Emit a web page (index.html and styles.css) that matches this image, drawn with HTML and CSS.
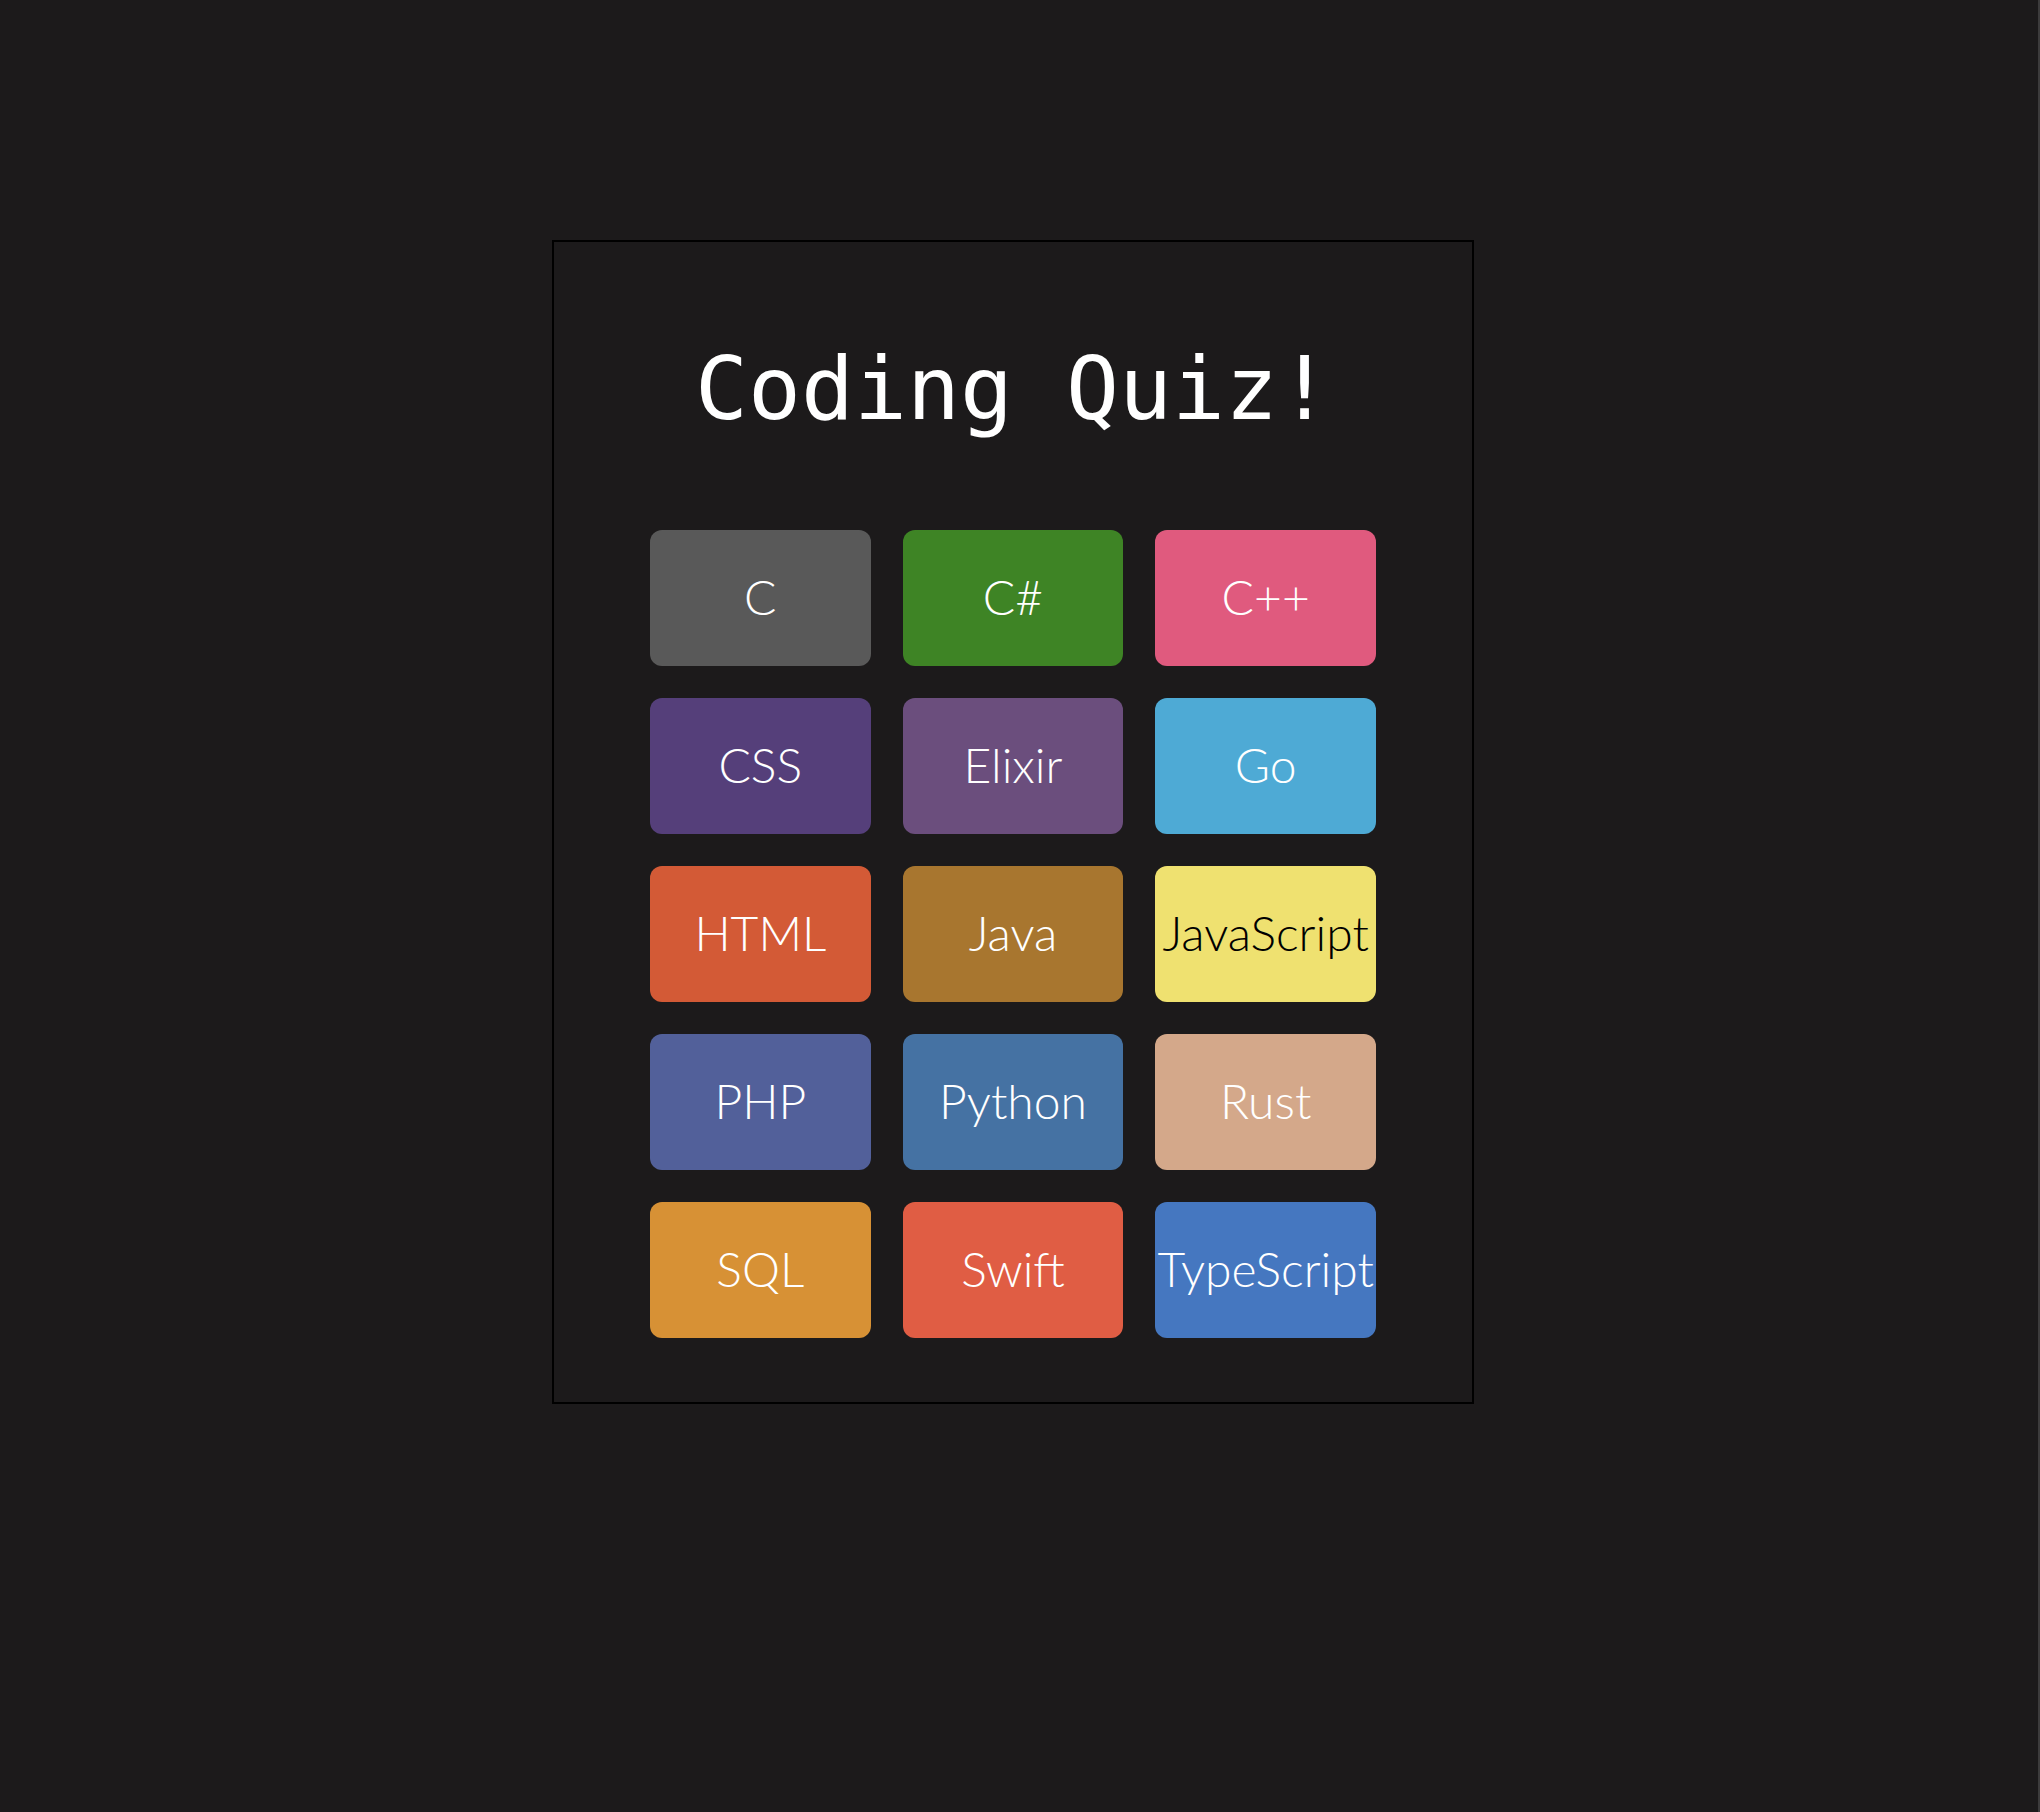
FILE: index.html
```html
<!DOCTYPE html>
<html lang="en">
<head>
<meta charset="utf-8">
<title>Coding Quiz!</title>
<link rel="stylesheet" href="styles.css">
</head>
<body>
  <main class="quiz">
    <h1 class="quiz-title">Coding Quiz!</h1>
    <div class="lang-grid">
      <button class="lang lang-c">C</button>
      <button class="lang lang-csharp">C#</button>
      <button class="lang lang-cpp">C++</button>
      <button class="lang lang-css">CSS</button>
      <button class="lang lang-elixir">Elixir</button>
      <button class="lang lang-go">Go</button>
      <button class="lang lang-html">HTML</button>
      <button class="lang lang-java">Java</button>
      <button class="lang lang-js">JavaScript</button>
      <button class="lang lang-php">PHP</button>
      <button class="lang lang-python">Python</button>
      <button class="lang lang-rust">Rust</button>
      <button class="lang lang-sql">SQL</button>
      <button class="lang lang-swift">Swift</button>
      <button class="lang lang-ts">TypeScript</button>
    </div>
  </main>
</body>
</html>
```

FILE: styles.css
```css
html {
  background: #1c1a1b;
}

body {
  margin: 0;
  min-height: 1812px;
  box-sizing: border-box;
  padding: 240px 12px 0 0;
  border-right: 2px solid #3c3b3c;
  background: #1c1a1b;
}

.quiz {
  width: 922px;
  height: 1164px;
  box-sizing: border-box;
  margin: 0 auto;
  border: 2px solid #000;
  background: #1c1a1b;
  display: flex;
  flex-direction: column;
  align-items: center;
}

.quiz-title {
  margin: 103px 0 0 0;
  font-family: "DejaVu Sans Mono", "Liberation Mono", monospace;
  font-weight: 400;
  font-size: 88px;
  line-height: 88px;
  color: #ffffff;
}

.lang-grid {
  margin-top: 97px;
  width: 726px;
  display: grid;
  grid-template-columns: repeat(3, 1fr);
  grid-auto-rows: 136px;
  gap: 32px;
}

.lang {
  border: none;
  border-radius: 12px;
  padding: 0 0 4px 0;
  font-family: Lato, "Open Sans", sans-serif;
  font-weight: 300;
  font-size: 48px;
  color: #ffffff;
  white-space: nowrap;
  text-align: center;
  cursor: pointer;
}

.lang-c { background: #595959; }
.lang-csharp { background: #3e8425; }
.lang-cpp { background: #e05a7e; }
.lang-css { background: #553f7a; }
.lang-elixir { background: #6b4e7d; }
.lang-go { background: #4eaad5; }
.lang-html { background: #d35a36; }
.lang-java { background: #a8762f; }
.lang-js { background: #efe170; color: #000000; }
.lang-php { background: #52609a; }
.lang-python { background: #4572a3; }
.lang-rust { background: #d4a88a; }
.lang-sql { background: #d79135; }
.lang-swift { background: #e05d44; }
.lang-ts { background: #4577c0; }
```
